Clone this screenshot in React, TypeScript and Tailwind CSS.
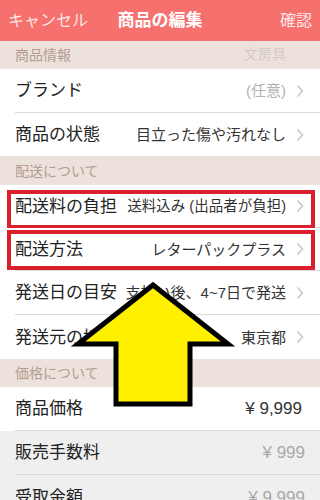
import React from "react";

const FONT = { fontFamily: '"Liberation Sans", "Noto Sans CJK JP", sans-serif' };

// ── Small chevron ─────────────────────────────────────────────
function Chevron() {
  return (
    <svg width="8" height="14" viewBox="0 0 8 14" className="ml-[10px] shrink-0">
      <polyline points="1.5,1.5 6.5,7 1.5,12.5" fill="none" stroke="#c4c4c8" strokeWidth="1.4" />
    </svg>
  );
}

function Section({ title, h = "h-[28px]", extra }: { title: string; h?: string; extra?: string }) {
  return (
    <div className={`${h} bg-[#ede2db] flex items-center justify-between pl-[15px] pr-[34px]`}>
      <span className="text-[14px] text-[#b39d93] leading-none">{title}</span>
      {extra && <span className="text-[14px] text-[#d4cac4] leading-none -mt-[3px]">{extra}</span>}
    </div>
  );
}

type RowProps = {
  label: string;
  value: string;
  h?: string;
  valueClass?: string;
  chevron?: boolean;
  divider?: boolean;
  bg?: string;
  mark?: string;
};

function Row({
  label,
  value,
  h = "h-[44px]",
  valueClass = "text-[15px] text-[#333]",
  chevron = true,
  divider = true,
  bg = "bg-white",
  mark,
}: RowProps) {
  return (
    <div className={`relative ${h} ${bg} pl-[15px]`}>
      <div
        className={`h-full flex items-center justify-between ${chevron ? "pr-[16px]" : "pr-[18px]"} ${
          divider ? "border-b border-[#d9d9d9]" : ""
        }`}
      >
        <span className="text-[17px] text-[#222] whitespace-nowrap leading-none">{label}</span>
        <div className="flex items-center">
          <span className={`${valueClass} whitespace-nowrap leading-none`}>{value}</span>
          {chevron && <Chevron />}
        </div>
      </div>
      {mark && <div className={`absolute left-[7px] right-[5px] border-[4px] border-[#d9202c] ${mark}`} />}
    </div>
  );
}

export default function App() {
  return (
    <div className="relative w-[320px] h-[500px] overflow-hidden bg-white" style={FONT}>
      {/* ── Nav bar ─────────────────────────────── */}
      <div className="h-[41px] bg-[#f6706d] grid grid-cols-[1fr_auto_1fr] items-center px-[8px]">
        <span className="text-[16px] text-[#fde6e5] leading-none">キャンセル</span>
        <span className="text-[17px] font-bold text-white leading-none">商品の編集</span>
        <span className="text-[16px] text-[#fde6e5] leading-none justify-self-end">確認</span>
      </div>

      <Section title="商品情報" extra="文房具" />
      <Row label="ブランド" value="(任意)" valueClass="text-[15px] text-[#b3b3b3]" />
      <Row label="商品の状態" value="目立った傷や汚れなし" h="h-[43px]" divider={false} />

      <Section title="配送について" h="h-[29px]" />
      <Row
        label="配送料の負担"
        value="送料込み (出品者が負担)"
        h="h-[43px]"
        valueClass="text-[14.5px] text-[#333]"
        mark="top-[5px] bottom-[-1px]"
      />
      <Row label="配送方法" value="レターパックプラス" h="h-[43px]" mark="top-[2px] bottom-[1px]" />
      <Row label="発送日の目安" value="支払い後、4~7日で発送" />
      <Row label="発送元の地域" value="東京都" divider={false} />

      <Section title="価格について" />
      <Row label="商品価格" value="¥ 9,999" chevron={false} valueClass="text-[17px] text-[#333]" />
      <Row
        label="販売手数料"
        value="¥ 999"
        chevron={false}
        bg="bg-[#efefef]"
        valueClass="text-[17px] text-[#a8a8a8] -mr-[3px]"
      />
      <Row
        label="受取金額"
        value="¥ 9,999"
        chevron={false}
        bg="bg-[#efefef]"
        divider={false}
        valueClass="text-[17px] text-[#a8a8a8] -mr-[3px]"
      />

      {/* ── Annotation arrow ────────────────────── */}
      <svg className="absolute inset-0 pointer-events-none" width="320" height="500" viewBox="0 0 320 500">
        <polygon
          points="153,285 78,344 116,344 116,404 190,404 190,344 228,344"
          fill="#fff000"
          stroke="#000"
          strokeWidth="5"
          strokeLinejoin="miter"
        />
      </svg>
    </div>
  );
}
